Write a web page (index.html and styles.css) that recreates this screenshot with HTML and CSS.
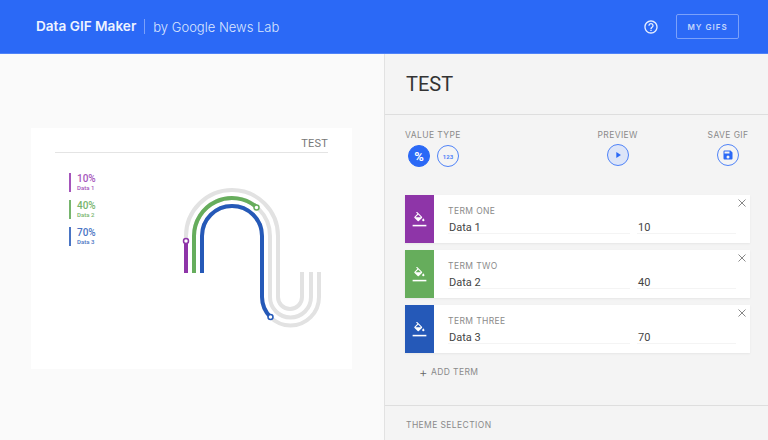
FILE: index.html
```html
<!DOCTYPE html>
<html lang="en">
  <head>
    <meta charset="UTF-8" />
    <meta name="viewport" content="width=device-width, initial-scale=1.0" />
    <title>Data GIF Maker</title>
    <link rel="stylesheet" href="styles.css">
  </head>
  <body>
    <header class="topbar">
      <div class="brand">
        <span class="brand-name">Data GIF Maker</span>
        <span class="brand-by">by Google News Lab</span>
      </div>
      <svg class="help-icon" viewBox="0 0 24 24" width="16" height="16">
        <path d="M11 18h2v-2h-2v2zm1-16C6.48 2 2 6.48 2 12s4.48 10 10 10 10-4.48 10-10S17.52 2 12 2zm0 18c-4.41 0-8-3.59-8-8s3.59-8 8-8 8 3.59 8 8-3.59 8-8 8zm0-14c-2.21 0-4 1.79-4 4h2c0-1.1.9-2 2-2s2 .9 2 2c0 2-3 1.75-3 5h2c0-2.25 3-2.5 3-5 0-2.21-1.79-4-4-4z" />
      </svg>
      <button class="my-gifs">MY GIFS</button>
    </header>

    <div class="main">
      <section class="stage">
        <div class="card">
          <div class="card-title">TEST</div>
          <div class="card-body">
            <ul class="legend">
              <li class="legend-item purple"><b>10%</b><span>Data 1</span></li>
              <li class="legend-item green"><b>40%</b><span>Data 2</span></li>
              <li class="legend-item blue"><b>70%</b><span>Data 3</span></li>
            </ul>
            <svg class="chart" viewBox="180 185 145 145" width="145" height="145" fill="none" stroke-width="4">
              <g stroke="#e2e2e2">
                <path d="M186 273V236a46 46 0 0 1 92 0V297a12 12 0 0 0 24 0V272" />
                <path d="M194 273V236a38 38 0 0 1 76 0V297a20.5 20.5 0 0 0 41 0V272" />
                <path d="M202 273V236a30 30 0 0 1 60 0V297a28.5 28.5 0 0 0 57 0V272" />
              </g>
              <path stroke="#8e35a8" d="M186 273V241" />
              <path stroke="#66ad5c" d="M194 273V236a38 38 0 0 1 62.5-29" />
              <path stroke="#2559b8" d="M202 273V236a30 30 0 0 1 60 0V297a28.5 28.5 0 0 0 8.5 20" />
              <circle cx="186" cy="241" r="2.5" fill="#fff" stroke="#8e35a8" stroke-width="1.5" />
              <circle cx="256.5" cy="207.5" r="2.5" fill="#fff" stroke="#66ad5c" stroke-width="1.5" />
              <circle cx="270.5" cy="317" r="2.5" fill="#fff" stroke="#2559b8" stroke-width="1.5" />
            </svg>
          </div>
        </div>
      </section>

      <section class="panel">
        <h1 class="panel-title">TEST</h1>

        <div class="controls">
          <div class="control value-type">
            <div class="label">VALUE TYPE</div>
            <div class="round-row">
              <button class="round active">%</button>
              <button class="round small-text">123</button>
            </div>
          </div>
          <div class="control preview">
            <div class="label">PREVIEW</div>
            <button class="round tinted">
              <svg viewBox="0 0 24 24" width="10" height="10"><path d="M8 5v14l11-7z" /></svg>
            </button>
          </div>
          <div class="control save">
            <div class="label">SAVE GIF</div>
            <button class="round">
              <svg viewBox="0 0 24 24" width="12" height="12"><path d="M17 3H5a2 2 0 0 0-2 2v14a2 2 0 0 0 2 2h14a2 2 0 0 0 2-2V7l-4-4zm-5 16a3 3 0 1 1 0-6 3 3 0 0 1 0 6zm3-10H5V5h10v4z" /></svg>
            </button>
          </div>
        </div>

        <div class="terms">
          <div class="term">
            <div class="swatch purple-bg">
              <svg viewBox="0 0 24 24"><path transform="translate(1 -.5) scale(.9)" d="M16.56 8.94 7.62 0 6.21 1.41l2.38 2.38-5.15 5.15a1.49 1.49 0 0 0 0 2.12l5.5 5.5c.29.29.68.44 1.06.44s.77-.15 1.06-.44l5.5-5.5c.59-.58.59-1.53 0-2.12zM5.21 10 10 5.21 14.79 10H5.21zM19 11.5s-2 2.17-2 3.5a2 2 0 0 0 4 0c0-1.33-2-3.5-2-3.5z" /><path d="M1 20.5h22v2.5H1z" /></svg>
            </div>
            <div class="term-fields">
              <div class="term-name">TERM ONE</div>
              <div class="term-inputs">
                <div class="field field-name">Data 1</div>
                <div class="field field-value">10</div>
              </div>
            </div>
            <svg class="close" viewBox="0 0 8 8"><path d="M.5.5l7 7M7.5.5l-7 7" /></svg>
          </div>

          <div class="term">
            <div class="swatch green-bg">
              <svg viewBox="0 0 24 24"><path transform="translate(1 -.5) scale(.9)" d="M16.56 8.94 7.62 0 6.21 1.41l2.38 2.38-5.15 5.15a1.49 1.49 0 0 0 0 2.12l5.5 5.5c.29.29.68.44 1.06.44s.77-.15 1.06-.44l5.5-5.5c.59-.58.59-1.53 0-2.12zM5.21 10 10 5.21 14.79 10H5.21zM19 11.5s-2 2.17-2 3.5a2 2 0 0 0 4 0c0-1.33-2-3.5-2-3.5z" /><path d="M1 20.5h22v2.5H1z" /></svg>
            </div>
            <div class="term-fields">
              <div class="term-name">TERM TWO</div>
              <div class="term-inputs">
                <div class="field field-name">Data 2</div>
                <div class="field field-value">40</div>
              </div>
            </div>
            <svg class="close" viewBox="0 0 8 8"><path d="M.5.5l7 7M7.5.5l-7 7" /></svg>
          </div>

          <div class="term">
            <div class="swatch blue-bg">
              <svg viewBox="0 0 24 24"><path transform="translate(1 -.5) scale(.9)" d="M16.56 8.94 7.62 0 6.21 1.41l2.38 2.38-5.15 5.15a1.49 1.49 0 0 0 0 2.12l5.5 5.5c.29.29.68.44 1.06.44s.77-.15 1.06-.44l5.5-5.5c.59-.58.59-1.53 0-2.12zM5.21 10 10 5.21 14.79 10H5.21zM19 11.5s-2 2.17-2 3.5a2 2 0 0 0 4 0c0-1.33-2-3.5-2-3.5z" /><path d="M1 20.5h22v2.5H1z" /></svg>
            </div>
            <div class="term-fields">
              <div class="term-name">TERM THREE</div>
              <div class="term-inputs">
                <div class="field field-name">Data 3</div>
                <div class="field field-value">70</div>
              </div>
            </div>
            <svg class="close" viewBox="0 0 8 8"><path d="M.5.5l7 7M7.5.5l-7 7" /></svg>
          </div>
        </div>

        <div class="add-term"><span class="plus">+</span>ADD TERM</div>

        <div class="theme">THEME SELECTION</div>
      </section>
    </div>
  </body>
</html>
```

FILE: styles.css
```css
* {
  box-sizing: border-box;
}
html,
body {
  height: 100%;
}
body {
  margin: 0;
  overflow: hidden;
  font-family: Roboto, "Liberation Sans", sans-serif;
  background-color: #fafafa;
}
button {
  font-family: inherit;
  padding: 0;
  cursor: pointer;
}

/* top bar */
.topbar {
  height: 54px;
  display: flex;
  align-items: center;
  padding: 0 29px 0 36px;
  background-color: #2b69f6;
  border-bottom: 1px solid #4f83f8;
  color: #fff;
}
.brand {
  display: flex;
  align-items: center;
  flex: 1;
  font-family: Inter, sans-serif;
}
.brand-name {
  font-size: 13.6px;
  font-weight: 600;
  color: #eef3ff;
  padding-right: 8px;
  border-right: 1px solid #7ba1fa;
  line-height: 15px;
}
.brand-by {
  padding-left: 8px;
  font-size: 13px;
  font-weight: 300;
  color: #dbe6fe;
}
.help-icon {
  fill: #e6eeff;
  margin-right: 17px;
}
.my-gifs {
  width: 63px;
  height: 25px;
  background: none;
  border: 1px solid #7ba1fa;
  border-radius: 2px;
  color: #c4d6fd;
  font-family: Inter, sans-serif;
  font-size: 8px;
  font-weight: 600;
  letter-spacing: 1px;
}

.main {
  display: flex;
  height: 386px;
}

/* left side with the chart */
.stage {
  width: 384px;
  padding: 74px 32px 0 31px;
}
.card {
  height: 241px;
  padding: 0 24px;
  background-color: #fff;
}
.card-title {
  height: 25px;
  padding-top: 10px;
  text-align: right;
  font-size: 11px;
  line-height: 12px;
  letter-spacing: 0.2px;
  color: #777;
  border-bottom: 1px solid #e4e4e4;
}
.card-body {
  display: flex;
  justify-content: space-between;
}
.legend {
  list-style: none;
  margin: 20px 0 0 14px;
  padding: 0;
}
.legend-item {
  height: 19px;
  margin-bottom: 8px;
  padding: 1px 0 0 6px;
  border-left: 2px solid;
  display: flex;
  flex-direction: column;
  line-height: 1;
}
.legend-item b {
  font-size: 10px;
  font-weight: 500;
}
.legend-item span {
  font-size: 6px;
  font-weight: 500;
  margin-top: 1px;
}
.purple {
  color: #a555bb;
}
.green {
  color: #76b56d;
}
.blue {
  color: #4a75c4;
}
.chart {
  margin: 32px 3px 0 0;
}

/* right side */
.panel {
  width: 384px;
  background-color: #f4f4f4;
  border-left: 1px solid #e2e2e2;
}
.panel-title {
  height: 61px;
  margin: 0;
  padding: 19px 20px 0 21px;
  font-size: 20px;
  line-height: 22px;
  font-weight: 400;
  color: #333;
  border-bottom: 1px solid #dedede;
}
.controls {
  height: 80px;
  padding: 15px 20px 0;
  display: flex;
}
.label {
  font-family: Inter, sans-serif;
  font-size: 8.5px;
  line-height: 10px;
  letter-spacing: 0.4px;
  white-space: nowrap;
  color: #8a8a8a;
}
.value-type {
  width: 194px;
}
.preview {
  width: 41px;
  margin-right: 70px;
  display: flex;
  flex-direction: column;
  align-items: center;
}
.save {
  width: 40px;
  display: flex;
  flex-direction: column;
  align-items: center;
}
.round-row {
  display: flex;
  gap: 7px;
  margin: 5px 0 0 3px;
}
.round {
  width: 22px;
  height: 22px;
  display: flex;
  align-items: center;
  justify-content: center;
  margin-top: 4px;
  border: 1.5px solid #4f83f8;
  border-radius: 50%;
  background: none;
  color: #2b69f6;
  fill: #2b69f6;
}
.round-row .round {
  margin-top: 0;
}
.round.active {
  background-color: #2b69f6;
  border-color: #2b69f6;
  color: #fff;
  font-size: 13px;
  font-weight: 700;
}
.round.small-text {
  font-size: 6px;
  font-weight: 700;
  color: #4f83f8;
}
.round.tinted {
  background-color: #dde5f8;
}

/* term rows */
.terms {
  display: flex;
  flex-direction: column;
  gap: 7px;
  padding: 0 18px 0 20px;
}
.term {
  position: relative;
  height: 48px;
  display: flex;
  background-color: #fff;
  box-shadow: 0 1px 2px rgba(0, 0, 0, 0.06);
}
.swatch {
  width: 29px;
  display: flex;
  align-items: center;
  justify-content: center;
}
.swatch svg {
  width: 15px;
  height: 15px;
  fill: #fff;
}
.purple-bg {
  background-color: #8e35a8;
}
.green-bg {
  background-color: #66ad5c;
}
.blue-bg {
  background-color: #2559b8;
}
.term-fields {
  flex: 1;
  padding: 11px 14px 0 14px;
}
.term-name {
  font-family: Inter, sans-serif;
  font-size: 8.5px;
  line-height: 10px;
  letter-spacing: 0.4px;
  color: #8a8a8a;
}
.term-inputs {
  display: flex;
  gap: 7px;
  margin-top: 3px;
}
.field {
  height: 15px;
  padding-left: 1px;
  font-size: 11px;
  line-height: 18px;
  color: #444;
  border-bottom: 1px solid #f4f4f4;
}
.field-name {
  width: 182px;
}
.field-value {
  flex: 1;
}
.close {
  position: absolute;
  top: 4px;
  right: 4px;
  width: 8px;
  height: 8px;
  fill: none;
  stroke: #888;
  stroke-width: 1;
}
.add-term {
  display: flex;
  align-items: center;
  height: 38px;
  margin-bottom: 14px;
  padding-left: 34px;
  font-family: Inter, sans-serif;
  font-size: 8.5px;
  letter-spacing: 0.4px;
  color: #8a8a8a;
}
.plus {
  margin-right: 3px;
  font-size: 13px;
  font-weight: 300;
  color: #666;
}
.theme {
  padding: 14px 20px 0 21px;
  font-family: Inter, sans-serif;
  font-size: 8.5px;
  line-height: 10px;
  letter-spacing: 0.4px;
  color: #8a8a8a;
  border-top: 1px solid #dedede;
}
```
